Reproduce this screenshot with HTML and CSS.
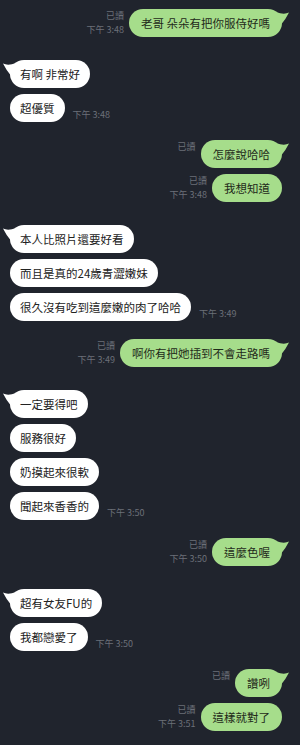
FILE: index.html
```html
<!DOCTYPE html>
<html lang="zh-TW">
<head>
    <meta charset="UTF-8">
    <meta name="viewport" content="width=device-width, initial-scale=1.0">
    <title>聊天</title>
    <link rel="stylesheet" href="styles.css">
</head>
<body>
    <div class="chat">
        <!-- 我方 -->
        <div class="row me">
            <div class="meta"><span>已讀</span><span>下午 3:48</span></div>
            <div class="bubble tail">老哥 朵朵有把你服侍好嗎
                <svg class="tail-svg" viewBox="0 0 14 20" width="14" height="20"><path d="M0 3 Q8 6 13 3.5 Q10 10 4 17 L0 17 Z"/></svg>
            </div>
        </div>

        <!-- 對方 -->
        <div class="row you group">
            <div class="bubble tail">有啊 非常好
                <svg class="tail-svg" viewBox="0 0 14 20" width="14" height="20"><path d="M0 3 Q8 6 13 3.5 Q10 10 4 17 L0 17 Z"/></svg>
            </div>
        </div>
        <div class="row you">
            <div class="bubble">超優質</div>
            <div class="time">下午 3:48</div>
        </div>

        <div class="row me group-g">
            <div class="meta"><span>已讀</span></div>
            <div class="bubble tail">怎麼說哈哈
                <svg class="tail-svg" viewBox="0 0 14 20" width="14" height="20"><path d="M0 3 Q8 6 13 3.5 Q10 10 4 17 L0 17 Z"/></svg>
            </div>
        </div>
        <div class="row me">
            <div class="meta"><span>已讀</span><span>下午 3:48</span></div>
            <div class="bubble">我想知道</div>
        </div>

        <div class="row you group">
            <div class="bubble tail">本人比照片還要好看
                <svg class="tail-svg" viewBox="0 0 14 20" width="14" height="20"><path d="M0 3 Q8 6 13 3.5 Q10 10 4 17 L0 17 Z"/></svg>
            </div>
        </div>
        <div class="row you">
            <div class="bubble">而且是真的24歲青澀嫩妹</div>
        </div>
        <div class="row you">
            <div class="bubble">很久沒有吃到這麼嫩的肉了哈哈</div>
            <div class="time">下午 3:49</div>
        </div>

        <div class="row me group-g">
            <div class="meta"><span>已讀</span><span>下午 3:49</span></div>
            <div class="bubble tail">啊你有把她插到不會走路嗎
                <svg class="tail-svg" viewBox="0 0 14 20" width="14" height="20"><path d="M0 3 Q8 6 13 3.5 Q10 10 4 17 L0 17 Z"/></svg>
            </div>
        </div>

        <div class="row you group">
            <div class="bubble tail">一定要得吧
                <svg class="tail-svg" viewBox="0 0 14 20" width="14" height="20"><path d="M0 3 Q8 6 13 3.5 Q10 10 4 17 L0 17 Z"/></svg>
            </div>
        </div>
        <div class="row you">
            <div class="bubble">服務很好</div>
        </div>
        <div class="row you">
            <div class="bubble">奶摸起來很軟</div>
        </div>
        <div class="row you">
            <div class="bubble">聞起來香香的</div>
            <div class="time">下午 3:50</div>
        </div>

        <div class="row me group-g">
            <div class="meta"><span>已讀</span><span>下午 3:50</span></div>
            <div class="bubble tail">這麼色喔
                <svg class="tail-svg" viewBox="0 0 14 20" width="14" height="20"><path d="M0 3 Q8 6 13 3.5 Q10 10 4 17 L0 17 Z"/></svg>
            </div>
        </div>

        <div class="row you group">
            <div class="bubble tail">超有女友FU的
                <svg class="tail-svg" viewBox="0 0 14 20" width="14" height="20"><path d="M0 3 Q8 6 13 3.5 Q10 10 4 17 L0 17 Z"/></svg>
            </div>
        </div>
        <div class="row you">
            <div class="bubble">我都戀愛了</div>
            <div class="time">下午 3:50</div>
        </div>

        <div class="row me group-g">
            <div class="meta"><span>已讀</span></div>
            <div class="bubble tail">讚咧
                <svg class="tail-svg" viewBox="0 0 14 20" width="14" height="20"><path d="M0 3 Q8 6 13 3.5 Q10 10 4 17 L0 17 Z"/></svg>
            </div>
        </div>
        <div class="row me">
            <div class="meta"><span>已讀</span><span>下午 3:51</span></div>
            <div class="bubble">這樣就對了</div>
        </div>
    </div>
</body>
</html>
```

FILE: styles.css
```css
* {
    margin: 0;
    padding: 0;
    box-sizing: border-box;
}

body {
    background-color: #20242d;
    font-family: 'Noto Sans CJK TC', 'Noto Sans', sans-serif;
    width: 300px;
    height: 745px;
    overflow: hidden;
}

.chat {
    display: flex;
    flex-direction: column;
    gap: 6px;
    padding: 9px 18px 0 10px;
}

.row {
    display: flex;
    align-items: flex-start;
}

.row.group {
    margin-top: 17px;
}

.row.group-g {
    margin-top: 12px;
}

.me {
    justify-content: flex-end;
}

.bubble {
    position: relative;
    height: 28px;
    line-height: 28px;
    padding: 0 10px;
    border-radius: 14px;
    font-size: 11.5px;
    white-space: nowrap;
    color: #222;
}

.you .bubble {
    background-color: #ffffff;
}

.me .bubble {
    padding: 0 12px;
    background-color: #a6dd8b;
    color: #1f2a1a;
}

.tail-svg {
    position: absolute;
    top: 0;
}

.me .tail-svg {
    right: -8px;
    fill: #a6dd8b;
}

.you .tail-svg {
    left: -8px;
    fill: #ffffff;
    transform: scaleX(-1);
}

.meta {
    display: flex;
    flex-direction: column;
    align-items: flex-end;
    margin-right: 5px;
    font-size: 9px;
    line-height: 14px;
    color: #6c7079;
}

.time {
    align-self: flex-end;
    margin-left: 8px;
    font-size: 9px;
    line-height: 14px;
    color: #6c7079;
}
```
